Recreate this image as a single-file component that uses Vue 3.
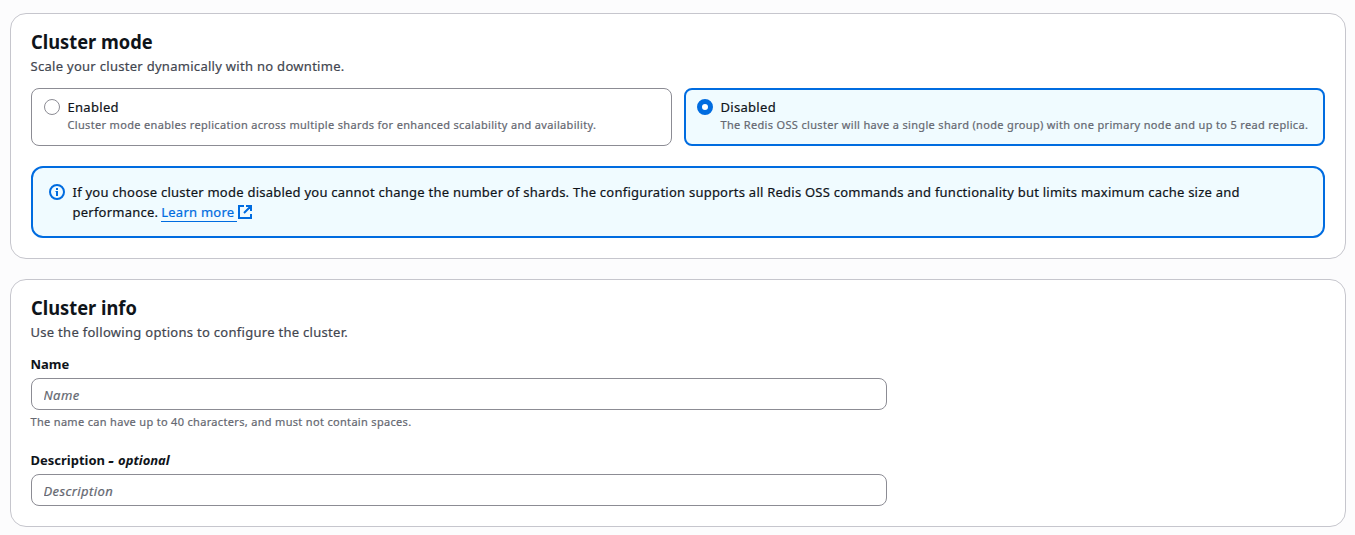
<script setup>
const modes = [
  { name: 'Enabled', text: 'Cluster mode enables replication across multiple shards for enhanced scalability and availability.', on: false },
  { name: 'Disabled', text: 'The Redis OSS cluster will have a single shard (node group) with one primary node and up to 5 read replica.', on: true },
]
</script>

<template>
  <main class="page">
    <section class="card mode">
      <h2><span>Cluster mode</span></h2>
      <p class="sub">Scale your cluster dynamically with no downtime.</p>
      <div class="tiles">
        <label v-for="m in modes" :key="m.name" class="tile" :class="{ on: m.on }">
          <span class="radio"></span>
          <span class="body">
            <span class="name">{{ m.name }}</span>
            <span class="desc">{{ m.text }}</span>
          </span>
        </label>
      </div>
      <div class="alert">
        <svg class="info" viewBox="0 0 16 16" width="16" height="16" fill="none" stroke="#006ce0" stroke-width="2">
          <circle cx="8" cy="8" r="7" />
          <path d="M8 12V7M8 6V4" />
          <path d="M6.5 7.5H8" stroke-width="1" />
        </svg>
        <div class="msg">
          <div>If you choose cluster mode disabled you cannot change the number of shards. The configuration supports all Redis OSS commands and functionality but limits maximum cache size and</div>
          <div>performance. <a><span>Learn more</span><svg viewBox="0 0 16 16" width="16" height="16" fill="none" stroke="#006ce0" stroke-width="2"><path d="M7 2H2v12h12v-4M9 2h5v5M7 9l7-7" /></svg></a></div>
        </div>
      </div>
    </section>
    <section class="card details">
      <h2><span>Cluster info</span></h2>
      <p class="sub">Use the following options to configure the cluster.</p>
      <div class="field">
        <label class="label">Name</label>
        <input placeholder="Name" />
        <div class="hint">The name can have up to 40 characters, and must not contain spaces.</div>
      </div>
      <div class="field last">
        <label class="label">Description <i><b>-</b> optional</i></label>
        <input placeholder="Description" />
      </div>
    </section>
  </main>
</template>

<style>
body { background: #fcfcfd; overflow: hidden; }
</style>
<style scoped>
* { box-sizing: border-box; }
.page { height: 535px; padding: 13px 9px 8px 10px; font: 13px/20px "Noto Sans", sans-serif; letter-spacing: .238px; text-indent: -.5px; color: #0f141a; display: flex; flex-direction: column; gap: 20px; -webkit-text-stroke: .2px; }
.card { background: #fff; border: 1px solid #c6c6cd; border-radius: 16px; padding: 16px 20px 0; }
.mode { height: 246px; }
.details { height: 248px; }
h2 { margin: 0; font-size: 20px; line-height: 24px; font-weight: 700; letter-spacing: 0; text-indent: 0; -webkit-text-stroke: 0; }
h2 span { display: inline-block; transform: scaleX(.914); transform-origin: left; }
.sub { margin: 2px 0 0; color: #424650; line-height: 20px; letter-spacing: .29px; }
.tiles { display: grid; grid-template-columns: 641px 641px; gap: 12px; margin-top: 12px; }
.tile { height: 58px; border: 1px solid #8c8c94; border-radius: 8px; display: flex; padding: 8px 12px; }
.tile.on { border: 2px solid #006ce0; background: #f0fbff; padding: 7px 11px; }
.radio { width: 16px; height: 16px; border: 1px solid #8c8c94; border-radius: 50%; margin: 2px 8px 0 0; background: #fff; flex: none; }
.on .radio { border: 5px solid #006ce0; }
.body { white-space: nowrap; }
.name, .desc { display: block; }
.name { letter-spacing: .3px; }
.desc { color: #656871; font-size: 11px; line-height: 16px; letter-spacing: .33px; }
.alert { height: 72px; margin-top: 20px; border: 2px solid #006ce0; border-radius: 12px; background: #f0fbff; padding: 14px 16px; display: flex; gap: 8px; white-space: nowrap; }
.info { margin-top: 2px; flex: none; }
a { color: #006ce0; display: inline-block; margin-left: -.2px; }
a span { display: inline-block; height: 20px; padding-right: 3px; border-bottom: 1px solid #006ce0; text-indent: 0; }
a svg { vertical-align: -3px; }
.field { margin-top: 12px; width: 856px; }
.last { margin-top: 20px; }
.label { display: block; font-weight: 700; line-height: 20px; letter-spacing: 0; -webkit-text-stroke: 0; }
.label i { letter-spacing: 0; }
.label b { display: inline-block; transform: scaleX(1.3); margin: 0 1px; text-indent: 0; }
input { display: block; width: 100%; height: 32px; margin-top: 4px; border: 1px solid #8c8c94; border-radius: 8px; padding: 6px 12px 4px; font: 13px/20px "Noto Sans", sans-serif; letter-spacing: .4px; text-indent: -.5px; outline: 0; }
input::placeholder { color: #656871; font-style: italic; opacity: 1; }
.hint { margin-top: 4px; font-size: 11px; line-height: 16px; color: #656871; letter-spacing: .32px; }
</style>
